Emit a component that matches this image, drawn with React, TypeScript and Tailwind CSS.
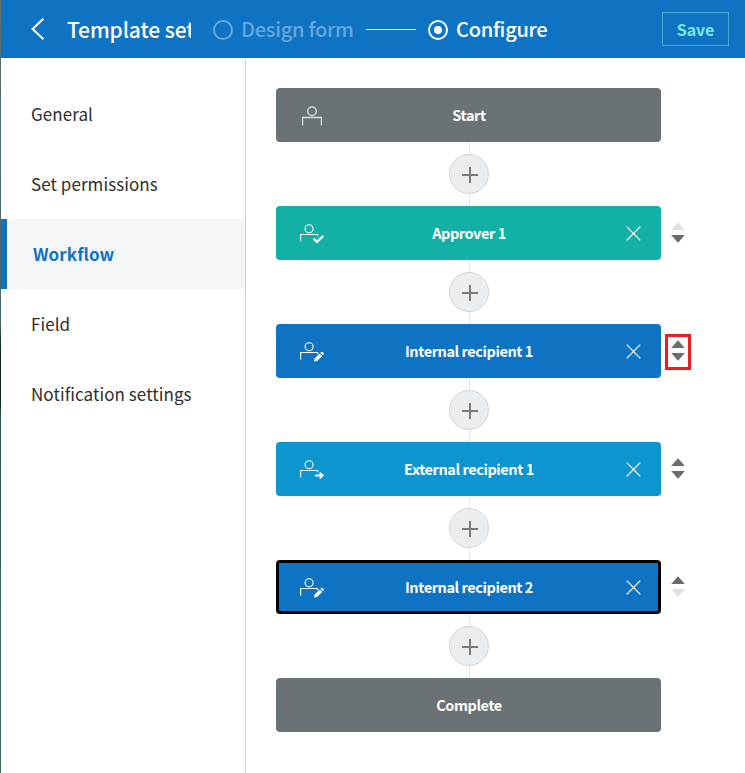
import React from "react";

type Kind = "plain" | "check" | "pencil" | "arrow";

function PersonIcon({ kind }: { kind: Kind }) {
  if (kind === "plain") {
    return (
      <svg width="28" height="28" viewBox="0 0 28 28" fill="none" stroke="#dfe2e3" strokeWidth="1.3" className="shrink-0">
        <circle cx="14" cy="10.2" r="4.3" />
        <path d="M4.6 24.5V16.5H23.4V24.5" />
      </svg>
    );
  }
  return (
    <svg width="28" height="28" viewBox="0 0 28 28" fill="none" stroke="#fff" strokeWidth="1.1" className="shrink-0">
      <circle cx="11.1" cy="9.8" r="4" />
      <path d="M2.6 22.5V15.5H19.6V17.2" />
      {kind === "check" && <path d="M15.6 19.6L19 22.8L25.4 16.9" strokeWidth="2.4" />}
      {kind === "pencil" && (
        <g fill="#fff" stroke="none">
          <path d="M16.6 21.4L21.6 16.4L24.1 18.9L19.1 23.9L16 24.5Z" />
          <path d="M22.3 15.7L23.3 14.9Q24 14.5 24.8 15.2L25.6 16Q26.2 16.8 25.7 17.4L24.9 18.2Z" />
        </g>
      )}
      {kind === "arrow" && (
        <g>
          <path d="M17 20.5H23" strokeWidth="2" />
          <path d="M21.6 16.6V24.4L26 20.5Z" fill="#fff" stroke="none" />
        </g>
      )}
    </svg>
  );
}

function Connector() {
  return (
    <div className="ml-[173px] flex h-16 w-10 flex-col items-center">
      <div className="ml-px h-3 w-px bg-[#e6e6e6]" />
      <div className="flex size-10 items-center justify-center rounded-full border border-[#d2d4d5] bg-[#ebeef1] pt-[2px] pl-[2px]">
        <svg width="16" height="16" viewBox="0 0 16 16" stroke="#7b7b7b" strokeWidth="2">
          <path d="M8 0V16M0 8H16" />
        </svg>
      </div>
      <div className="ml-px h-3 w-px bg-[#e6e6e6]" />
    </div>
  );
}

function Sorter({ up, down, marked }: { up: boolean; down: boolean; marked?: boolean }) {
  return (
    <div
      className={`mt-[2px] ml-1 flex h-9 w-[26px] items-center justify-center border-[3px] pb-[2px] ${
        marked ? "border-[#ee1c25]" : "border-transparent"
      }`}
    >
      <svg width="14" height="22" viewBox="0 0 14 22" className="shrink-0">
        <path d="M7 0.2L13.8 8H0.2Z" fill={up ? "#6c6c6c" : "#e1e1e1"} />
        <path d="M7 20.8L13.8 13H0.2Z" fill={down ? "#6c6c6c" : "#e1e1e1"} />
      </svg>
    </div>
  );
}

function CloseIcon() {
  return (
    <svg width="15" height="15" viewBox="0 0 15 15" stroke="#fff" strokeWidth="1.2">
      <path d="M0.7 0.7L14.3 14.3M14.3 0.7L0.7 14.3" />
    </svg>
  );
}

type Step = {
  label: string;
  color: string;
  kind?: Kind;
  sort?: { up: boolean; down: boolean; marked?: boolean };
  selected?: boolean;
};

const steps: Step[] = [
  { label: "Start", color: "bg-[#6a7275]", kind: "plain" },
  { label: "Approver 1", color: "bg-[#12b0a5]", kind: "check", sort: { up: false, down: true } },
  { label: "Internal recipient 1", color: "bg-[#0f73c4]", kind: "pencil", sort: { up: true, down: true, marked: true } },
  { label: "External recipient 1", color: "bg-[#0c95ce]", kind: "arrow", sort: { up: true, down: true } },
  { label: "Internal recipient 2", color: "bg-[#0f73c4]", kind: "pencil", sort: { up: true, down: false }, selected: true },
  { label: "Complete", color: "bg-[#6a7275]" },
];

function StepCard({ step }: { step: Step }) {
  return (
    <div className="flex h-[54px] items-center">
      <div
        className={`grid h-[54px] w-[385px] grid-cols-[60px_1fr_60px] items-center rounded-[4px] ${step.color} ${
          step.selected ? "border-[3px] border-black px-0" : "px-[3px]"
        }`}
      >
        <div className="pl-[19px]">{step.kind && <PersonIcon kind={step.kind} />}</div>
        <div className="pb-px pl-px text-center text-[14.5px] leading-5 font-bold tracking-[-0.42px] whitespace-nowrap text-white">
          {step.label}
        </div>
        <div className="flex justify-end pt-px pr-[17px]">{step.sort && <CloseIcon />}</div>
      </div>
      {step.sort && <Sorter {...step.sort} />}
    </div>
  );
}

const menu = ["General", "Set permissions", "Workflow", "Field", "Notification settings"];

export default function App() {
  return (
    <div className="flex h-[773px] w-[745px] overflow-hidden bg-white font-['Noto_Sans_CJK_JP','Noto_Sans',sans-serif] text-[#2e2e2e]">
      <div className="w-px shrink-0 bg-[linear-gradient(#68706b_0px,#4f6a70_120px,#456a6c_320px,#12301c_345px,#12221c_400px,#2f5a56_420px,#426765_773px)]" />
      <div className="flex min-w-0 flex-1 flex-col">
        <header className="flex h-[58px] shrink-0 items-center bg-[#0f73c4] pr-4 text-white">
          <svg width="14" height="22" viewBox="0 0 14 22" fill="none" stroke="#fff" strokeWidth="2" className="ml-[30px] shrink-0">
            <path d="M12.4 0.8L1.6 11L12.4 21.2" />
          </svg>
          <div className="ml-[22px] w-[124px] shrink-0 overflow-hidden pb-px text-[21px] leading-8 font-medium tracking-[-0.1px] whitespace-nowrap">
            Template settings
          </div>
          <div className="mt-[2px] ml-[22px] size-5 shrink-0 rounded-full border-2 border-[#66a7dc]" />
          <div className="ml-2 w-[113px] text-[20px] leading-8 font-medium tracking-[-0.25px] whitespace-nowrap text-[#66a7dc]">
            Design form
          </div>
          <div className="ml-3 h-px w-[50px] bg-white" />
          <div className="mt-[2px] ml-3 flex size-5 shrink-0 items-center justify-center rounded-full border-2 border-white">
            <div className="size-2 rounded-full bg-white" />
          </div>
          <div className="ml-2 text-[20px] leading-8 font-medium tracking-[-0.25px] whitespace-nowrap">Configure</div>
          <button className="ml-auto h-[34px] w-[67px] border border-[#44aed0] pb-px text-[16px] leading-5 font-bold tracking-[-0.1px] text-[#77e9e6]">
            Save
          </button>
        </header>
        <div className="flex flex-1">
          <nav className="w-[245px] border-r border-[#cfcfcf] pt-[21px]">
            {menu.map((item) =>
              item === "Workflow" ? (
                <div key={item} className="flex h-[70px] items-center border-l-[6px] border-[#0f73c4] bg-[#f5f6f8] pb-px pl-[26px] text-[17px] font-bold tracking-[0.07px] text-[#0f73c4]">
                  {item}
                </div>
              ) : (
                <div key={item} className="flex h-[70px] items-center pb-px pl-[30px] text-[17px] tracking-[0.07px]">
                  {item}
                </div>
              ),
            )}
          </nav>
          <main className="pt-[30px] pl-[30px]">
            {steps.map((step, i) => (
              <React.Fragment key={step.label}>
                {i > 0 && <Connector />}
                <StepCard step={step} />
              </React.Fragment>
            ))}
          </main>
        </div>
      </div>
    </div>
  );
}
